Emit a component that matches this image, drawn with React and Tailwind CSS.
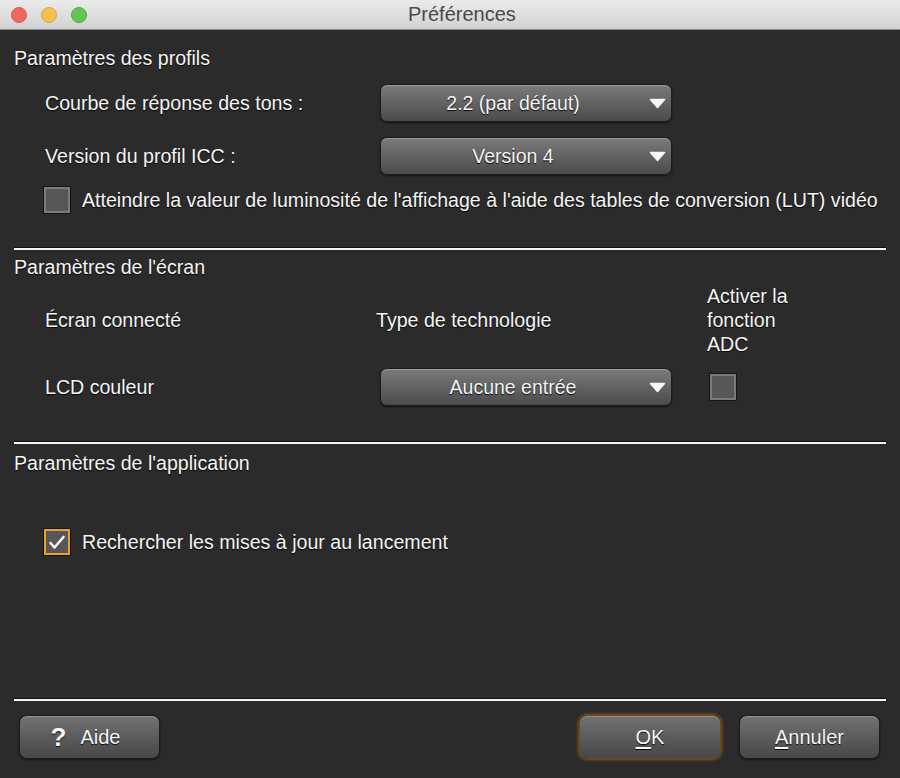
import React, { useState } from 'react';

const shadow = '[text-shadow:0_1px_1px_rgba(0,0,0,0.9)]';

const Select = ({ value }) => (
  <div className="relative w-[292px] h-[38px] pr-[26px] rounded-[7px] border border-[#1c1c1c] bg-gradient-to-b from-[#7b7b7b] to-[#4b4b4b] shadow-[inset_0_1px_0_rgba(255,255,255,0.25),0_1px_2px_rgba(0,0,0,0.6)] flex items-center justify-center">
    <span className={`text-[19.5px] text-[#f4f4f4] ${shadow}`}>{value}</span>
    <svg className="absolute right-[5px] top-[13px]" width="17" height="11" viewBox="0 0 17 11">
      <path d="M1.5 1.5 L15.5 1.5 L8.5 9.5 Z" fill="#f6f6f6" stroke="#f6f6f6" strokeWidth="1.5" strokeLinejoin="round" />
    </svg>
  </div>
);

const Checkbox = ({ checked, onClick }) => (
  <button
    type="button"
    onClick={onClick}
    className={`w-[26px] h-[26px] shrink-0 flex items-center justify-center bg-[#575757] border-2 ${checked ? 'border-[#e7a12d]' : 'border-[#7a7a7a]'} shadow-[0_0_0_1px_#151515]`}
  >
    {checked && (
      <svg width="20" height="18" viewBox="0 0 20 18">
        <path d="M3.5 10 L7.5 14.5 L16.5 4" fill="none" stroke="#f2f2f2" strokeWidth="2.6" strokeLinecap="round" strokeLinejoin="round" />
      </svg>
    )}
  </button>
);

const Separator = ({ className }) => (
  <div className={`mx-[14px] border-t border-[#111] ${className}`}>
    <div className="h-[2px] bg-[#f4f4f4]" />
  </div>
);

const Button = ({ children, focused, className = '' }) => (
  <button
    type="button"
    className={`h-[44px] rounded-[8px] border bg-gradient-to-b from-[#727272] to-[#474747] text-[20px] text-[#f6f6f6] flex items-center justify-center ${shadow} ${
      focused
        ? 'border-[#6a4a15] shadow-[0_0_3px_1px_rgba(200,130,20,0.55),inset_0_1px_0_rgba(255,255,255,0.2)]'
        : 'border-[#1c1c1c] shadow-[inset_0_1px_0_rgba(255,255,255,0.25),0_1px_2px_rgba(0,0,0,0.6)]'
    } ${className}`}
  >
    {children}
  </button>
);

const App = () => {
  const [lut, setLut] = useState(false);
  const [adc, setAdc] = useState(false);
  const [updates, setUpdates] = useState(true);

  return (
    <div className="w-[900px] h-[778px] bg-[#2b2b2b] flex flex-col overflow-hidden font-['Liberation_Sans',Arial,sans-serif] text-[#f4f4f4] text-[19.6px] leading-[24px]">
      {/* title bar */}
      <div className="h-[30px] shrink-0 relative bg-gradient-to-b from-[#ebebeb] to-[#d2d2d2] border-b border-[#8a8a8a] flex items-center">
        <div className="flex gap-[14px] pl-[11px]">
          <span className="w-[16px] h-[16px] rounded-full bg-[#ee6a5e] border border-[#d25a4f]" />
          <span className="w-[16px] h-[16px] rounded-full bg-[#f6c04f] border border-[#d9a33e]" />
          <span className="w-[16px] h-[16px] rounded-full bg-[#62c554] border border-[#52a842]" />
        </div>
        <span className="absolute left-[408px] top-[2px] text-[20px] text-[#4a4a4a]">Préférences</span>
      </div>

      {/* profils */}
      <div className={`mt-[16px] pl-[14px] h-[24px] ${shadow}`}>Paramètres des profils</div>
      <div className="pl-[45px]">
        <div className="mt-[14px] flex items-center">
          <span className={`w-[335px] ${shadow}`}>Courbe de réponse des tons :</span>
          <Select value="2.2 (par défaut)" />
        </div>
        <div className="mt-[15px] flex items-center">
          <span className={`w-[335px] ${shadow}`}>Version du profil ICC :</span>
          <Select value="Version 4" />
        </div>
        <div className="mt-[12px] flex items-center gap-[12px] -ml-[1px]">
          <Checkbox checked={lut} onClick={() => setLut(!lut)} />
          <span className={`whitespace-nowrap ${shadow}`}>
            Atteindre la valeur de luminosité de l'affichage à l'aide des tables de conversion (LUT) vidéo
          </span>
        </div>
      </div>

      <Separator className="mt-[34px]" />

      {/* écran */}
      <div className={`mt-[5px] pl-[14px] h-[24px] ${shadow}`}>Paramètres de l'écran</div>
      <div className="pl-[45px]">
        <div className="mt-[5px] flex items-center">
          <span className={`w-[331px] ${shadow}`}>Écran connecté</span>
          <span className={`w-[331px] ${shadow}`}>Type de technologie</span>
          <span className={`w-[92px] ${shadow}`}>Activer la fonction ADC</span>
        </div>
        <div className="mt-[12px] flex items-center">
          <span className={`w-[335px] ${shadow}`}>LCD couleur</span>
          <Select value="Aucune entrée" />
          <div className="ml-[38px]">
            <Checkbox checked={adc} onClick={() => setAdc(!adc)} />
          </div>
        </div>
      </div>

      <Separator className="mt-[35px]" />

      {/* application */}
      <div className={`mt-[7px] pl-[14px] h-[24px] ${shadow}`}>Paramètres de l'application</div>
      <div className="pl-[44px] mt-[54px] flex items-center gap-[12px]">
        <Checkbox checked={updates} onClick={() => setUpdates(!updates)} />
        <span className={shadow}>Rechercher les mises à jour au lancement</span>
      </div>

      <Separator className="mt-[143px]" />

      {/* footer */}
      <div className="mt-[14px] px-[19px] flex items-center">
        <Button className="w-[141px] gap-[14px] pr-[8px]">
          <span className="text-[26px] font-bold leading-none">?</span>
          <span>Aide</span>
        </Button>
        <div className="flex-1" />
        <Button focused className="w-[142px]">
          <span><span className="underline underline-offset-[3px]">O</span>K</span>
        </Button>
        <Button className="w-[141px] ml-[18px] mr-[1px]">
          <span><span className="underline underline-offset-[3px]">A</span>nnuler</span>
        </Button>
      </div>
    </div>
  );
};

export default App;
